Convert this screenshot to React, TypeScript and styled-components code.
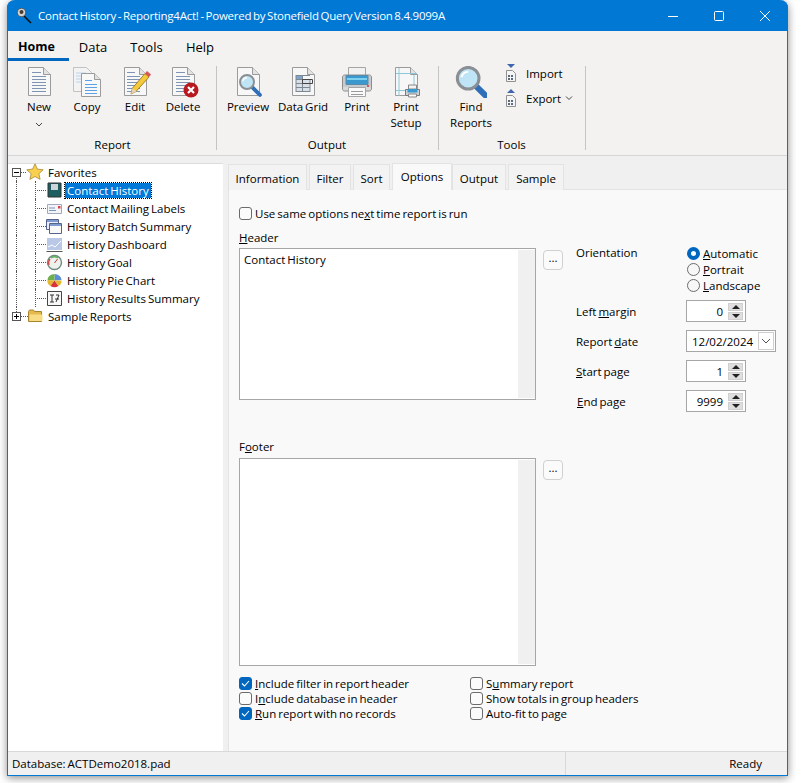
import React from "react";
import styled, { createGlobalStyle } from "styled-components";

const GlobalStyle = createGlobalStyle`
  html, body {
    margin: 0;
    padding: 0;
    background: #fff;
  }
  body {
    font-family: "Open Sans", "Liberation Sans", sans-serif;
    font-size: 11.5px;
    word-spacing: -1px;
    color: #000;
  }
`;

const Desktop = styled.div`
  width: 796px;
  height: 783px;
  padding-left: 7px;
  box-sizing: border-box;
  overflow: hidden;
`;

const Window = styled.div`
  width: 781px;
  height: 776px;
  box-sizing: border-box;
  display: flex;
  flex-direction: column;
  background: #f0f0f0;
  border: 1px solid #0078d4;
  border-top: 0;
  border-radius: 8px 8px 0 0;
  box-shadow: 0 2px 8px rgba(0, 0, 0, 0.45);
`;

const TitleBar = styled.div`
  height: 31px;
  flex: none;
  display: flex;
  align-items: center;
  background: #0078d4;
  color: #fff;
  margin: 0 -1px;
  border-radius: 8px 8px 0 0;
  padding-left: 9px;
`;

const TitleText = styled.span`
  margin-left: 6px;
  flex: 1;
  letter-spacing: -0.24px;
  white-space: nowrap;
`;

const WinButton = styled.button`
  width: 46px;
  height: 31px;
  padding: 0;
  border: 0;
  background: none;
  display: flex;
  align-items: center;
  justify-content: center;
`;

const MenuBar = styled.div`
  height: 30px;
  flex: none;
  display: flex;
  background: #f3f2f1;
`;

const MenuItem = styled.div<{ $active?: boolean; $width: number }>`
  width: ${(p) => p.$width}px;
  box-sizing: border-box;
  height: 30px;
  padding: 7px ${(p) => (p.$active ? 4 : 0)}px 0 0;
  text-align: center;
  font-size: ${(p) => (p.$active ? "12.5px" : "13px")};
  font-weight: ${(p) => (p.$active ? 700 : 400)};
  border-bottom: 3px solid ${(p) => (p.$active ? "#0067c0" : "transparent")};
`;

const Ribbon = styled.div`
  height: 95px;
  flex: none;
  display: flex;
  background: #f3f2f1;
  border-bottom: 1px solid #d6d6d6;
  box-sizing: border-box;
`;

const Group = styled.div<{ $width: number; $pad: number }>`
  width: ${(p) => p.$width}px;
  box-sizing: border-box;
  padding: 5px 0 0 ${(p) => p.$pad}px;
  display: flex;
  flex-direction: column;
  position: relative;
  &::after {
    content: "";
    position: absolute;
    right: 0;
    top: 5px;
    bottom: 5px;
    width: 1px;
    background: #c4c4c4;
  }
`;

const GroupButtons = styled.div`
  display: flex;
  flex: 1;
`;

const GroupLabel = styled.div<{ $shift: number }>`
  height: 16px;
  line-height: 16px;
  margin: 0 0 2px ${(p) => -p.$shift}px;
  text-align: center;
`;

const RibbonButton = styled.div<{ $width: number }>`
  width: ${(p) => p.$width}px;
  display: flex;
  flex-direction: column;
  align-items: center;
  line-height: 16px;
  text-align: center;
  svg {
    flex: none;
    margin-bottom: 1px;
  }
`;

const SmallStack = styled.div`
  margin: -2px 0 0 8px;
  display: flex;
  flex-direction: column;
  gap: 7px;
`;

const SmallButton = styled.div`
  height: 18px;
  display: flex;
  align-items: center;
  gap: 8px;
`;

const SmallChevron = styled.svg`
  margin-left: -4px;
`;

const Main = styled.div`
  flex: 1;
  min-height: 0;
  padding-top: 7px;
  display: flex;
`;

const TreePanel = styled.div`
  width: 215px;
  flex: none;
  box-sizing: border-box;
  background: #fff;
  box-shadow: inset 0 1px #dcdcdc;
`;

const TreeRow = styled.div<{ $level: number; $last?: boolean; $root?: boolean }>`
  height: 18px;
  display: flex;
  align-items: center;
  position: relative;
  padding-left: ${(p) => (p.$level === 0 ? 4 : 27)}px;
  white-space: nowrap;
  &::before {
    content: "";
    position: absolute;
    left: 8px;
    top: ${(p) => (p.$root ? "9px" : "0")};
    height: ${(p) => (p.$last ? "9px" : p.$root ? "9px" : "18px")};
    border-left: 1px dotted #555;
  }
  &::after {
    content: "";
    display: ${(p) => (p.$level === 1 ? "block" : "none")};
    position: absolute;
    left: 27px;
    top: 0;
    height: ${(p) => (p.$last ? "9px" : "18px")};
    border-left: 1px dotted #555;
  }
`;

const Expander = styled.span<{ $open?: boolean }>`
  width: 9px;
  height: 9px;
  box-sizing: border-box;
  flex: none;
  background: #fff;
  border: 1px solid #555;
  position: relative;
  z-index: 1;
  &::before {
    content: "";
    position: absolute;
    left: 1px;
    right: 1px;
    top: 3px;
    height: 1px;
    background: #000;
  }
  &::after {
    content: "";
    display: ${(p) => (p.$open ? "none" : "block")};
    position: absolute;
    top: 1px;
    bottom: 1px;
    left: 3px;
    width: 1px;
    background: #000;
  }
`;

const Connector = styled.span<{ $width: number }>`
  width: ${(p) => p.$width}px;
  flex: none;
  border-bottom: 1px dotted #555;
`;

const TreeLabel = styled.span<{ $selected?: boolean }>`
  margin-left: 2px;
  padding: 0 2px;
  line-height: 15px;
  background: ${(p) => (p.$selected ? "#0078d7" : "transparent")};
  color: ${(p) => (p.$selected ? "#fff" : "#000")};
  outline: ${(p) => (p.$selected ? "1px dotted #000" : "none")};
`;

const Splitter = styled.div`
  width: 6px;
  flex: none;
`;

const RightPanel = styled.div`
  flex: 1;
  min-width: 0;
  display: flex;
  flex-direction: column;
`;

const TabStrip = styled.div`
  height: 27px;
  flex: none;
  display: flex;
  gap: 2px;
  margin-left: -1px;
  box-sizing: border-box;
  border-bottom: 1px solid #e3e3e3;
`;

const Tab = styled.div<{ $active?: boolean; $width: number }>`
  width: ${(p) => p.$width}px;
  box-sizing: border-box;
  height: ${(p) => (p.$active ? 27 : 26)}px;
  margin-top: ${(p) => (p.$active ? 0 : 1)}px;
  margin-right: ${(p) => (p.$active ? -2 : 0)}px;
  padding-top: ${(p) => (p.$active ? 5 : 6)}px;
  text-align: center;
  background: ${(p) => (p.$active ? "#f9f9f9" : "#f3f3f3")};
  border: 1px solid #e3e3e3;
  border-bottom: 0;
  position: relative;
  z-index: ${(p) => (p.$active ? 1 : 0)};
  margin-bottom: -1px;
`;

const Pane = styled.div`
  flex: 1;
  min-height: 0;
  padding: 16px 0 0 10px;
  background: #f9f9f9;
  border-left: 1px solid #e3e3e3;
  margin-left: -1px;
`;

const Check = styled.label`
  height: 15px;
  display: flex;
  align-items: center;
  gap: 3px;
  white-space: nowrap;
`;

const Box = styled.span<{ $on?: boolean }>`
  width: 13px;
  height: 13px;
  box-sizing: border-box;
  flex: none;
  border-radius: 3px;
  border: 1px solid ${(p) => (p.$on ? "#0067c0" : "#6b6b6b")};
  background: ${(p) => (p.$on ? "#0067c0" : "#fbfbfb")};
  display: flex;
  align-items: center;
  justify-content: center;
`;

const FieldLabel = styled.div<{ $top?: number }>`
  height: 16px;
  line-height: 16px;
  margin-top: ${(p) => p.$top ?? 0}px;
`;

const EditorsRow = styled.div`
  display: flex;
  margin-top: 9px;
`;

const EditorBlock = styled.div`
  width: 337px;
  flex: none;
`;

const EditorLine = styled.div<{ $top: number }>`
  margin-top: ${(p) => p.$top}px;
  display: flex;
  align-items: flex-start;
  gap: 7px;
`;

const Memo = styled.div<{ $height: number }>`
  width: 297px;
  height: ${(p) => p.$height}px;
  box-sizing: border-box;
  border: 1px solid #a6a6a6;
  background: #fff;
  display: flex;
  flex: none;
`;

const MemoText = styled.div`
  flex: 1;
  padding: 3px 4px;
`;

const MemoTrack = styled.div`
  width: 17px;
  margin: 1px 0;
  background: #f0f0f0;
`;

const DotsButton = styled.button`
  width: 20px;
  height: 20px;
  margin-top: 2px;
  padding: 0 0 4px;
  flex: none;
  border: 1px solid #d0d0d0;
  border-radius: 4px;
  background: #fbfbfb;
  font: inherit;
  line-height: 14px;
`;

const Settings = styled.div`
  padding-top: 15px;
  display: flex;
  flex-direction: column;
  gap: 8px;
`;

const OptionRow = styled.div`
  display: flex;
  align-items: center;
`;

const OrientationRow = styled.div`
  display: flex;
  align-items: flex-start;
  margin-bottom: -1px;
`;

const OptionLabel = styled.div<{ $indent?: boolean }>`
  width: 110px;
  flex: none;
  padding-left: ${(p) => (p.$indent ? 1 : 0)}px;
  box-sizing: border-box;
`;

const Radios = styled.div`
  margin-left: 1px;
  display: flex;
  flex-direction: column;
`;

const RadioLine = styled.div`
  height: 16px;
  display: flex;
  align-items: center;
  gap: 3px;
`;

const RadioDot = styled.span<{ $on?: boolean }>`
  width: 13px;
  height: 13px;
  box-sizing: border-box;
  border-radius: 50%;
  flex: none;
  background: ${(p) => (p.$on ? "#fff" : "#f7f7f7")};
  border: ${(p) => (p.$on ? "4px solid #0067c0" : "1px solid #6b6b6b")};
`;

const Spinner = styled.div`
  width: 60px;
  height: 22px;
  box-sizing: border-box;
  border: 1px solid #a6a6a6;
  background: #fff;
  display: flex;
  align-items: center;
  justify-content: flex-end;
  padding-right: 2px;
  gap: 5px;
`;

const SpinButtons = styled.div`
  display: flex;
  flex-direction: column;
  gap: 1px;
`;

const SpinButton = styled.div<{ $down?: boolean }>`
  width: 15px;
  height: 8px;
  background: #dfdfdf;
  border: 1px solid #cfcfcf;
  box-sizing: border-box;
  display: flex;
  align-items: center;
  justify-content: center;
  &::before {
    content: "";
    border-left: 4px solid transparent;
    border-right: 4px solid transparent;
    ${(p) => (p.$down ? "border-top: 4px solid #222;" : "border-bottom: 4px solid #222;")}
  }
`;

const DateField = styled.div`
  width: 90px;
  height: 22px;
  box-sizing: border-box;
  border: 1px solid #a6a6a6;
  background: #fff;
  display: flex;
  align-items: center;
  justify-content: space-between;
  padding: 0 1px 0 5px;
`;

const DateDrop = styled.div`
  width: 16px;
  height: 18px;
  box-sizing: border-box;
  border: 1px solid #cfcfcf;
  display: flex;
  align-items: center;
  justify-content: center;
`;

const OptionsGrid = styled.div`
  margin-top: 10px;
  display: flex;
`;

const OptionsColumn = styled.div`
  width: 231px;
  display: flex;
  flex-direction: column;
`;

const StatusBar = styled.div`
  height: 24px;
  flex: none;
  box-sizing: border-box;
  border-top: 1px solid #d9d9d9;
  background: #f0f0f0;
  display: flex;
  align-items: center;
`;

const StatusText = styled.div`
  width: 557px;
  flex: none;
  box-sizing: border-box;
  padding-left: 4px;
`;

const StatusReady = styled.div`
  flex: 1;
  height: 23px;
  line-height: 23px;
  text-align: right;
  padding-right: 25px;
  border-left: 1px solid #d9d9d9;
`;

const docShape = (
  <>
    <path d="M5.5 1.5h15l7 7v21h-22z" fill="#f7f7f7" stroke="#9b9b9b" />
    <path d="M20.5 1.5v7h7" fill="#e2e2e2" stroke="#9b9b9b" />
  </>
);

const DocLines = ({ color = "#7f93b2", x = 9, w = 14 }: { color?: string; x?: number; w?: number }) => (
  <g stroke={color}>
    <path d={`M${x} 6.5h${w - 5}M${x} 10.5h${w}M${x} 13.5h${w}M${x} 16.5h${w}M${x} 19.5h${w}M${x} 22.5h${w}M${x} 25.5h${w}`} />
  </g>
);

const Glass = ({ x, y, r, handle }: { x: number; y: number; r: number; handle: number }) => (
  <>
    <path
      d={`M${x + r * 0.7} ${y + r * 0.7}l${handle} ${handle}`}
      stroke="#2f6fb8"
      strokeWidth={r * 0.55}
      strokeLinecap="round"
    />
    <circle cx={x} cy={y} r={r} fill="#bfe4f5" stroke="#8a8f94" strokeWidth={r * 0.28} />
    <path
      d={`M${x - r * 0.6} ${y - r * 0.1}a${r * 0.6} ${r * 0.6} 0 0 1 ${r * 0.6} -${r * 0.5}`}
      fill="none"
      stroke="#fff"
      strokeWidth={r * 0.2}
    />
  </>
);

const NewIcon = () => (
  <svg width="32" height="32" viewBox="0 0 32 32">
    {docShape}
    <DocLines />
  </svg>
);

const CopyIcon = () => (
  <svg width="32" height="32" viewBox="0 0 32 32">
    <path d="M2.5 1.5h13l5 5v19h-18z" fill="#f3f3f3" stroke="#c2c2c2" />
    <path d="M5 7h10M5 10h10M5 13h10M5 16h10" stroke="#bcd2ec" />
    <path d="M10.5 7.5h13l6 6v17h-19z" fill="#f8f8f8" stroke="#9b9b9b" />
    <path d="M23.5 7.5v6h6" fill="#e2e2e2" stroke="#9b9b9b" />
    <path d="M14 14.5h7M14 18.5h12M14 21.5h12M14 24.5h12M14 27.5h12" stroke="#5da1e6" />
  </svg>
);

const EditIcon = () => (
  <svg width="32" height="32" viewBox="0 0 32 32">
    {docShape}
    <DocLines x={8} w={13} />
    <path d="M12 28l1.5-6L26 7.5l4 3.5-13 14.5z" fill="#f4c93c" stroke="#8f6b12" strokeWidth=".8" />
    <path d="M26 7.5l2-2.5 4 3.5-2 2.500z" fill="#d8555a" />
    <path d="M12 28l1.500-6 4 3.500z" fill="#e8d3ae" />
  </svg>
);

const DeleteIcon = () => (
  <svg width="32" height="32" viewBox="0 0 32 32">
    {docShape}
    <DocLines x={9} w={14} />
    <circle cx="24" cy="24" r="7.500" fill="#b8191f" />
    <path d="M21 21l6 6M27 21l-6 6" stroke="#fff" strokeWidth="2.200" />
  </svg>
);

const PreviewIcon = () => (
  <svg width="32" height="32" viewBox="0 0 32 32">
    {docShape}
    <Glass x={15} y={16} r={7} handle={8} />
  </svg>
);

const GridIcon = () => (
  <svg width="32" height="32" viewBox="0 0 32 32">
    {docShape}
    <path d="M9 9h7v4H9z" fill="#7fa3c9" />
    <path d="M9 13h14v13H9z" fill="#d9dfe6" />
    <path d="M9 9.500h14M9 13.500h14M9 17.500h14M9 21.500h14M9 25.500h14M9 9v17M15.500 9v17M23 13v13" stroke="#7d8791" fill="none" />
    <path d="M15.500 13.500h10v4h-10z" fill="none" stroke="#444" />
  </svg>
);

const PrintIcon = () => (
  <svg width="34" height="32" viewBox="0 0 34 32">
    <path d="M8.500 1.500h17v9h-17z" fill="#f1f1f1" stroke="#a5a5a5" />
    <path d="M2.500 11c0-1 1-2 2-2h25c1 0 2 1 2 2v12c0 1-1 2-2 2h-25c-1 0-2-1-2-2z" fill="#d9dadb" stroke="#8c8c8c" />
    <path d="M3 10h28v11H3z" fill="#c8cbce" />
    <path d="M6 9.500h22v9H6z" fill="#3a9ad0" stroke="#5d8aa8" />
    <path d="M7 13h20" stroke="#7ed0ee" strokeWidth="2" />
    <path d="M27 20h2" stroke="#d03030" strokeWidth="1.500" />
    <path d="M8.500 21.500h17v9h-17z" fill="#fafafa" stroke="#a5a5a5" />
    <path d="M11 25.500h12M11 28.500h12" stroke="#9a9a9a" />
  </svg>
);

const SetupIcon = () => (
  <svg width="32" height="32" viewBox="0 0 32 32">
    {docShape}
    <path d="M9 2v28M24 9v20M6 7.500h21M6 24.500h21" stroke="#8fc7d8" />
    <path d="M18.500 19h8v4h-8z" fill="#f3f3f3" stroke="#888" />
    <path d="M15.500 23.500h14v6h-14z" fill="#cfd2d5" stroke="#7a7a7a" />
    <path d="M17.500 23h10v3.500h-10z" fill="#3a9ad0" />
    <path d="M18.500 28h8v3h-8z" fill="#fafafa" stroke="#888" />
  </svg>
);

const FindIcon = () => (
  <svg width="32" height="32" viewBox="0 0 34 34">
    <Glass x={14} y={13} r={11.500} handle={11} />
  </svg>
);

const SmallDocIcon = ({ up }: { up?: boolean }) => (
  <svg width="14" height="18" viewBox="0 0 14 18">
    <path d="M2.500 6.500h6l3 3v8h-9z" fill="#f5f5f5" stroke="#909090" />
    <path d="M4 11h2v2H4zM7 11h2v2H7zM4 14h2v2H4zM7 14h2v2H7z" fill="#5b6a80" />
    {up ? <path d="M7 0l4 4H3z" fill="#3f66b0" /> : <path d="M3 0h8L7 4z" fill="#3f66b0" />}
  </svg>
);

const ToolIcon = () => (
  <svg width="16" height="16" viewBox="0 0 16 16">
    <path d="M8 8l7 7" stroke="#111" strokeWidth="1.600" />
    <circle cx="5.500" cy="4.500" r="4.200" fill="#d4d4d4" stroke="#4a4a4a" strokeWidth=".8" />
    <circle cx="5.500" cy="4" r="2" fill="#4a3a30" />
  </svg>
);

const StarIcon = () => (
  <svg width="18" height="18" viewBox="0 0 18 18">
    <path
      d="M9 .800l2.400 5.300 5.800.700-4.300 3.900 1.200 5.700L9 13.500l-5.100 2.900 1.200-5.700L.800 6.800l5.800-.700z"
      fill="#f8d04e"
      stroke="#a98a3a"
      strokeWidth=".8"
    />
  </svg>
);

const FolderIcon = () => (
  <svg width="16" height="16" viewBox="0 0 16 16">
    <path d="M.500 3.500l1-1.500h4l1 1.500h7v10H.500z" fill="#e6b94c" stroke="#a7852f" />
    <path d="M1.500 6.500h13v6.500h-13z" fill="#f8dd86" />
  </svg>
);

const ReportGlyph = ({ kind }: { kind: string }) => {
  const glyphs: Record<string, React.ReactNode> = {
    report: (
      <>
        <path d="M2 1h13v14H2z" fill="#1d5f60" stroke="#333" />
        <path d="M5 2h7v6H5z" fill="#cfd6da" />
      </>
    ),
    label: (
      <>
        <path d="M1.500 4.500h14v9h-14z" fill="#f1f4f9" stroke="#a2a9bb" />
        <path d="M3 8h6M3 10.500h7" stroke="#7f93b2" />
        <path d="M12 6h2.500v2.500H12z" fill="#d8434a" />
      </>
    ),
    batch: (
      <>
        <path d="M.500 1.500h12v10H.500z" fill="#e9eefa" stroke="#54638c" />
        <path d="M1 2h11v2H1z" fill="#7f9bd0" />
        <path d="M3.500 5.500h12v10h-12z" fill="#f8f8f8" stroke="#54638c" />
        <path d="M4 6h11v2H4z" fill="#7f9bd0" />
      </>
    ),
    dash: (
      <>
        <path d="M1 2h15v12H1z" fill="#b9c8e6" />
        <path d="M.500 15.500h16" stroke="#555" />
        <path d="M2 11l4-2 3 2 6-6" stroke="#fff" fill="none" />
      </>
    ),
    goal: (
      <>
        <circle cx="8.500" cy="8.500" r="7" fill="#eef2ee" stroke="#6d8a7d" strokeWidth="1.400" />
        <path d="M3 11a6 6 0 0 1 1-6" stroke="#d84b4b" strokeWidth="1.400" fill="none" />
        <path d="M5 4a6 6 0 0 1 7 0" stroke="#5db05d" strokeWidth="1.400" fill="none" />
        <path d="M8.500 9l3-4" stroke="#c33" />
      </>
    ),
    pie: (
      <>
        <path d="M8.500 8.500V2a7 6 0 0 1 7 6z" fill="#5b8ed6" />
        <path d="M8.500 8.500V2a7 6 0 0 0-7 6z" fill="#6eb04e" />
        <path d="M1.500 8l7 .500-4 5.500a7 6 0 0 1-3-6z" fill="#e3b72f" />
        <path d="M8.500 8.500l-4 5.500a7 6 0 0 0 8 0z" fill="#d8333a" />
        <path d="M8.500 8.500H15.500a7 6 0 0 1-3 5.500z" fill="#e3b72f" />
      </>
    ),
    results: (
      <>
        <path d="M1.500 1.500h14v14h-14z" fill="#f7f7f7" stroke="#444" />
        <path d="M4 5h4M6 5v7M4 12h4M10 5h3l-3 7M9 9h4" stroke="#333" fill="none" />
      </>
    ),
  };
  return (
    <svg width="17" height="17" viewBox="0 0 17 17">
      {glyphs[kind]}
    </svg>
  );
};

const treeItems = [
  { label: "Contact History", kind: "report", selected: true },
  { label: "Contact Mailing Labels", kind: "label" },
  { label: "History Batch Summary", kind: "batch" },
  { label: "History Dashboard", kind: "dash" },
  { label: "History Goal", kind: "goal" },
  { label: "History Pie Chart", kind: "pie" },
  { label: "History Results Summary", kind: "results" },
];

const tabs = [
  { label: "Information", width: 79 },
  { label: "Filter", width: 42 },
  { label: "Sort", width: 37 },
  { label: "Options", width: 60, active: true },
  { label: "Output", width: 54 },
  { label: "Sample", width: 56 },
];

const Spin = ({ value }: { value: string }) => (
  <Spinner>
    {value}
    <SpinButtons>
      <SpinButton />
      <SpinButton $down />
    </SpinButtons>
  </Spinner>
);

const Tick = () => (
  <svg width="9" height="9" viewBox="0 0 9 9">
    <path d="M1 4.500l2.500 2.500L8 2" fill="none" stroke="#fff" strokeWidth="1.100" />
  </svg>
);

const CheckItem = ({ on, children }: { on?: boolean; children: React.ReactNode }) => (
  <Check>
    <Box $on={on}>{on && <Tick />}</Box>
    <span>{children}</span>
  </Check>
);

const App = () => {
  return (
    <Desktop>
      <GlobalStyle />
      <Window>
        <TitleBar>
          <ToolIcon />
          <TitleText>Contact History - Reporting4Act! - Powered by Stonefield Query Version 8.4.9099A</TitleText>
          <WinButton>
            <svg width="12" height="12" viewBox="0 0 12 12">
              <path d="M1 6.500h10" stroke="#fff" />
            </svg>
          </WinButton>
          <WinButton>
            <svg width="12" height="12" viewBox="0 0 12 12">
              <rect x="1.500" y="1.500" width="9" height="9" rx="1" fill="none" stroke="#fff" />
            </svg>
          </WinButton>
          <WinButton>
            <svg width="12" height="12" viewBox="0 0 12 12">
              <path d="M1 1l10 10M11 1L1 11" stroke="#fff" />
            </svg>
          </WinButton>
        </TitleBar>
        <MenuBar>
          <MenuItem $active $width={61}>
            Home
          </MenuItem>
          <MenuItem $width={48}>Data</MenuItem>
          <MenuItem $width={59}>Tools</MenuItem>
          <MenuItem $width={48}>Help</MenuItem>
        </MenuBar>
        <Ribbon>
          <Group $width={209} $pad={7}>
            <GroupButtons>
              <RibbonButton $width={48}>
                <NewIcon />
                New
                <svg width="8" height="16" viewBox="0 0 8 16">
                  <path d="M1 8l3 3 3-3" fill="none" stroke="#444" />
                </svg>
              </RibbonButton>
              <RibbonButton $width={48}>
                <CopyIcon />
                Copy
              </RibbonButton>
              <RibbonButton $width={48}>
                <EditIcon />
                Edit
              </RibbonButton>
              <RibbonButton $width={48}>
                <DeleteIcon />
                Delete
              </RibbonButton>
            </GroupButtons>
            <GroupLabel $shift={7}>Report</GroupLabel>
          </Group>
          <Group $width={222} $pad={4}>
            <GroupButtons>
              <RibbonButton $width={54}>
                <PreviewIcon />
                Preview
              </RibbonButton>
              <RibbonButton $width={56}>
                <GridIcon />
                Data Grid
              </RibbonButton>
              <RibbonButton $width={52}>
                <PrintIcon />
                Print
              </RibbonButton>
              <RibbonButton $width={46}>
                <SetupIcon />
                Print
                <br />
                Setup
              </RibbonButton>
            </GroupButtons>
            <GroupLabel $shift={6}>Output</GroupLabel>
          </Group>
          <Group $width={147} $pad={7}>
            <GroupButtons>
              <RibbonButton $width={50}>
                <FindIcon />
                Find
                <br />
                Reports
              </RibbonButton>
              <SmallStack>
                <SmallButton>
                  <SmallDocIcon />
                  Import
                </SmallButton>
                <SmallButton>
                  <SmallDocIcon up />
                  Export
                  <SmallChevron width="8" height="8" viewBox="0 0 8 8">
                    <path d="M1 2.500l3 3 3-3" fill="none" stroke="#444" />
                  </SmallChevron>
                </SmallButton>
              </SmallStack>
            </GroupButtons>
            <GroupLabel $shift={9}>Tools</GroupLabel>
          </Group>
        </Ribbon>
        <Main>
          <TreePanel>
            <TreeRow $level={0} $root>
              <Expander $open />
              <Connector $width={5} />
              <StarIcon />
              <TreeLabel>Favorites</TreeLabel>
            </TreeRow>
            {treeItems.map((item) => (
              <TreeRow $level={1} key={item.label}>
                <Connector $width={11} />
                <ReportGlyph kind={item.kind} />
                <TreeLabel $selected={item.selected}>{item.label}</TreeLabel>
              </TreeRow>
            ))}
            <TreeRow $level={0} $last>
              <Expander />
              <Connector $width={7} />
              <FolderIcon />
              <TreeLabel>Sample Reports</TreeLabel>
            </TreeRow>
          </TreePanel>
          <Splitter />
          <RightPanel>
            <TabStrip>
              {tabs.map((tab) => (
                <Tab key={tab.label} $active={tab.active} $width={tab.width}>
                  {tab.label}
                </Tab>
              ))}
            </TabStrip>
            <Pane>
              <CheckItem>
                Use same options ne<u>x</u>t time report is run
              </CheckItem>
              <EditorsRow>
                <EditorBlock>
                  <FieldLabel>
                    <u>H</u>eader
                  </FieldLabel>
                  <EditorLine $top={2}>
                    <Memo $height={152}>
                      <MemoText>Contact History</MemoText>
                      <MemoTrack />
                    </Memo>
                    <DotsButton>...</DotsButton>
                  </EditorLine>
                </EditorBlock>
                <Settings>
                  <OrientationRow>
                    <OptionLabel>Orientation</OptionLabel>
                    <Radios>
                      <RadioLine>
                        <RadioDot $on />
                        <span>
                          <u>A</u>utomatic
                        </span>
                      </RadioLine>
                      <RadioLine>
                        <RadioDot />
                        <span>
                          <u>P</u>ortrait
                        </span>
                      </RadioLine>
                      <RadioLine>
                        <RadioDot />
                        <span>
                          <u>L</u>andscape
                        </span>
                      </RadioLine>
                    </Radios>
                  </OrientationRow>
                  <OptionRow>
                    <OptionLabel>
                      Left <u>m</u>argin
                    </OptionLabel>
                    <Spin value="0" />
                  </OptionRow>
                  <OptionRow>
                    <OptionLabel>
                      Report <u>d</u>ate
                    </OptionLabel>
                    <DateField>
                      12/02/2024
                      <DateDrop>
                        <svg width="10" height="8" viewBox="0 0 10 8">
                          <path d="M1 2l4 4 4-4" fill="none" stroke="#555" />
                        </svg>
                      </DateDrop>
                    </DateField>
                  </OptionRow>
                  <OptionRow>
                    <OptionLabel>
                      <u>S</u>tart page
                    </OptionLabel>
                    <Spin value="1" />
                  </OptionRow>
                  <OptionRow>
                    <OptionLabel $indent>
                      <u>E</u>nd page
                    </OptionLabel>
                    <Spin value="9999" />
                  </OptionRow>
                </Settings>
              </EditorsRow>
              <FieldLabel $top={27}>
                F<u>o</u>oter
              </FieldLabel>
              <EditorLine $top={3}>
                <Memo $height={208}>
                  <MemoText />
                  <MemoTrack />
                </Memo>
                <DotsButton>...</DotsButton>
              </EditorLine>
              <OptionsGrid>
                <OptionsColumn>
                  <CheckItem on>
                    <u>I</u>nclude filter in report header
                  </CheckItem>
                  <CheckItem>
                    I<u>n</u>clude database in header
                  </CheckItem>
                  <CheckItem on>
                    <u>R</u>un report with no records
                  </CheckItem>
                </OptionsColumn>
                <OptionsColumn>
                  <CheckItem>
                    S<u>u</u>mmary report
                  </CheckItem>
                  <CheckItem>
                    Show totals in <u>g</u>roup headers
                  </CheckItem>
                  <CheckItem>
                    Auto-fit to pa<u>g</u>e
                  </CheckItem>
                </OptionsColumn>
              </OptionsGrid>
            </Pane>
          </RightPanel>
        </Main>
        <StatusBar>
          <StatusText>Database: ACTDemo2018.pad</StatusText>
          <StatusReady>Ready</StatusReady>
        </StatusBar>
      </Window>
    </Desktop>
  );
};

export default App;
